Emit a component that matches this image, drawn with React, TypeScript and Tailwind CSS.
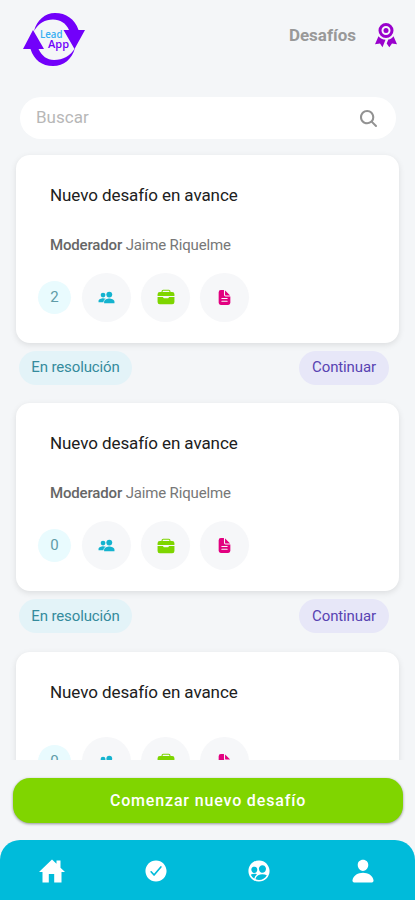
import { IoBriefcase, IoCheckmarkCircle, IoDocumentText, IoPeopleCircle, IoPeopleSharp, IoPerson, IoSearch } from 'react-icons/io5';

type Challenge = {
  id: number;
  title: string;
  moderator: string | null;
  members: number;
  status: string;
};

const challenges: Challenge[] = [
  { id: 1, title: 'Nuevo desafío en avance', moderator: 'Jaime Riquelme', members: 2, status: 'En resolución' },
  { id: 2, title: 'Nuevo desafío en avance', moderator: 'Jaime Riquelme', members: 0, status: 'En resolución' },
  { id: 3, title: 'Nuevo desafío en avance', moderator: null, members: 0, status: 'En resolución' },
];

function Logo() {
  return (
    <svg width="64" height="56" viewBox="0 0 64 56" className="shrink-0">
      <g fill="#7200fa">
        <path d="M12 19C15 8 23 1 33 1c11 0 20 6 23.500 17H63L52.500 37 41.500 18h5.500C44 11 38 7.500 31 7.500 23 7.500 17 11 12 19Z" />
        <path d="M53 36C50 47 42 54 31 54 20 54 12 48 8.500 37H1L11 18l11 19h-5.500C20 44 25 48 32 48c9 0 16.500-4 21-12Z" />
      </g>
      <text x="18" y="26" fontSize="10" fontWeight="600" fill="#36aef2" fontFamily="Open Sans, sans-serif" textLength="22.500" lengthAdjust="spacingAndGlyphs">Lead</text>
      <text x="26" y="36" fontSize="10" fontWeight="600" fill="#7200fa" fontFamily="Open Sans, sans-serif" textLength="21" lengthAdjust="spacingAndGlyphs">App</text>
    </svg>
  );
}

function HomeIcon() {
  return (
    <svg viewBox="0 0 26 24" fill="currentColor" className="h-6 w-[26px]">
      <path d="M13 .500 0 13h3.500v10.500h6.300V15h5.400v8.500h7.300V13H26l-4.500-4.300V1.500h-4v3.300Z" />
    </svg>
  );
}

function RibbonIcon() {
  return (
    <svg viewBox="0 0 24 26" className="h-[26px] w-6">
      <circle cx="12" cy="8.500" r="6" fill="none" stroke="#9900cc" strokeWidth="3" />
      <circle cx="12" cy="8.500" r="2.500" fill="#9900cc" />
      <path fill="#9900cc" d="M4.500 14.200c1.800 2.300 4.200 3.400 7 3.600L8.500 25.300 6 21.500l-5 .700ZM19.500 14.200c-1.300 1.700-3 2.900-5.200 3.400l-1.600 4 2.600 3.700 2.700-3.800 5 .700Z" />
    </svg>
  );
}

function ChallengeCard({ challenge }: { challenge: Challenge }) {
  return (
    <article className="mb-[18.700px]">
      <div className="rounded-[14px] bg-white pt-[29px] pb-[21px] pl-[22px] shadow-[0_2px_6px_rgba(0,0,0,0.1)]">
        <h2 className="pl-3 text-[17px] leading-[23px] tracking-[-0.080px] text-[#202020]">{challenge.title}</h2>
        {challenge.moderator && (
          <p className="mt-7 pl-3 text-[15px] leading-5 tracking-[-0.160px] text-[#777]">
            <span className="font-medium text-[#666]">Moderador</span> {challenge.moderator}
          </p>
        )}
        <div className="mt-[33px] flex items-center [p+&]:mt-[18px]">
          <span className="flex size-[33px] items-center justify-center rounded-full bg-[#e9fbfe] text-[15px] text-[#609ca8]">{challenge.members}</span>
          <span className="ml-[11px] flex size-[49px] items-center justify-center rounded-full bg-[#f6f7f9]">
            <IoPeopleSharp className="size-[17px] text-[#14b3cf]" />
          </span>
          <span className="ml-2.5 flex size-[49px] items-center justify-center rounded-full bg-[#f6f7f9]">
            <IoBriefcase className="size-[18px] text-[#7ed500]" />
          </span>
          <span className="ml-2.5 flex size-[49px] items-center justify-center rounded-full bg-[#f6f7f9]">
            <IoDocumentText className="size-[17px] text-[#e20080]" />
          </span>
        </div>
      </div>
      <div className="mt-2 flex justify-between pr-2.5 pl-[3px] text-[15px] tracking-[-0.120px]">
        <span className="flex h-[34px] w-[113px] items-center justify-center rounded-full bg-[#e3f3f8] text-[#358b9d]">{challenge.status}</span>
        <button className="h-[34px] w-[90px] rounded-full bg-[#e7e7f8] text-[#5843b2]">Continuar</button>
      </div>
    </article>
  );
}

export default function App() {
  return (
    <div className="flex h-[900px] w-full flex-col overflow-hidden bg-[#f4f6f8] font-[Roboto,sans-serif]">
      <header className="flex h-[97px] shrink-0 items-start justify-between pt-3 pr-[17px] pl-[22px]">
        <Logo />
        <div className="flex items-center gap-[18px] pt-[9px]">
          <h1 className="text-[17px] leading-[28px] font-bold text-[#999]">Desafíos</h1>
          <RibbonIcon />
        </div>
      </header>

      <div className="mr-[19px] ml-5 flex h-[42px] shrink-0 items-center justify-between rounded-full bg-white pr-[17px] pl-4">
        <input placeholder="Buscar" className="w-60 text-[17px] outline-none placeholder:text-[#b7b7b7]" />
        <IoSearch className="size-[21px] text-[#929292]" />
      </div>

      <main className="h-[621px] shrink-0 overflow-hidden px-4 pt-[15.500px]">
        {challenges.map((challenge) => (
          <ChallengeCard key={challenge.id} challenge={challenge} />
        ))}
      </main>

      <div className="shrink-0 pt-[18px] pr-3 pb-[17px] pl-[13px]">
        <button className="block h-[45px] w-full rounded-[17px] bg-[#80d500] text-[16px] font-medium tracking-[0.840px] text-white shadow-[0_1px_3px_rgba(0,0,0,0.4)]">
          Comenzar nuevo desafío
        </button>
      </div>

      <nav className="grid h-[60px] shrink-0 grid-cols-4 items-center justify-items-center rounded-t-[20px] bg-[#00bbda] pt-0.5 text-white">
        <HomeIcon />
        <IoCheckmarkCircle className="size-[26px]" />
        <IoPeopleCircle className="size-[26px]" />
        <IoPerson className="size-[26px]" />
      </nav>
    </div>
  );
}
